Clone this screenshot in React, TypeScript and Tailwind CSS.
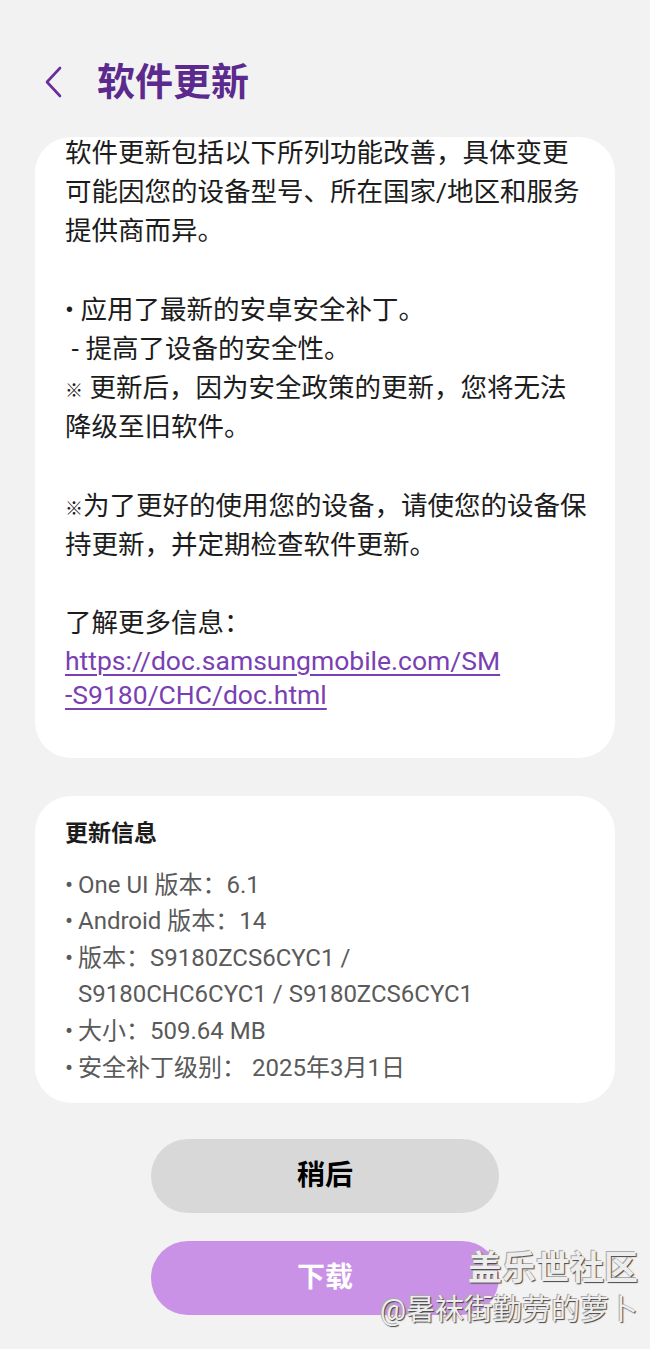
import React from 'react';

const font = 'Roboto, "Noto Sans CJK SC", "Noto Sans", sans-serif';

const infoItems = [
  ['One UI 版本：6.1'],
  ['Android 版本：14'],
  ['版本：S9180ZCS6CYC1 /', 'S9180CHC6CYC1 / S9180ZCS6CYC1'],
  ['大小：509.64 MB'],
  ['安全补丁级别： 2025年3月1日'],
];

const App = () => {
  return (
    <div
      className="relative min-h-[1349px] w-[650px] bg-[#f2f2f2] overflow-hidden"
      style={{ fontFamily: font }}
    >
      <header className="flex items-center h-[44px] mt-[60px] pl-[40px] gap-[29px]">
        <svg width="28" height="36" viewBox="0 0 28 36" className="text-[#6a2d9c]">
          <path d="M20 4 L7 18 L20 32" fill="none" stroke="currentColor" strokeWidth="2.6" strokeLinecap="round" strokeLinejoin="round" />
        </svg>
        <h1 className="text-[38px] font-bold text-[#5c2a8e] leading-none">软件更新</h1>
      </header>

      <div className="flow-root mx-[35px] mt-[33px] bg-white rounded-[36px] pl-[30px] pr-[26px] pb-[46px] text-[26.5px] leading-[39.2px] text-[#1c1c1c]">
        <div className="-mt-[4px]">
          <p>软件更新包括以下所列功能改善，具体变更可能因您的设备型号、所在国家/地区和服务提供商而异。</p>
          <p className="h-[39.2px]" />
          <p>• 应用了最新的安卓安全补丁。</p>
          <p>&nbsp;- 提高了设备的安全性。</p>
          <p className="h-[78.4px]">
            <span className="text-[18px] leading-none">※</span> 更新后，因为安全政策的更新，您将无法降级至旧软件。
          </p>
          <p className="h-[39.2px]" />
          <p className="h-[78.4px]">
            <span className="text-[18px] leading-none">※</span>为了更好的使用您的设备，请使您的设备保持更新，并定期检查软件更新。
          </p>
          <p className="h-[39.2px]" />
          <p>了解更多信息：</p>
          <a
            href="#"
            className="block text-[#7a3fb2] underline underline-offset-[4px] decoration-[2px] leading-[34px] mt-[1px]"
          >
            https://doc.samsungmobile.com/SM
            <br />
            -S9180/CHC/doc.html
          </a>
        </div>
      </div>

      <div className="mx-[35px] mt-[38px] bg-white rounded-[36px] pl-[30px] pr-[30px] pt-[20px] pb-[17px]">
        <h2 className="text-[23px] font-bold text-[#1c1c1c] leading-[36px]">更新信息</h2>
        <ul className="mt-[15px] text-[24px] leading-[36.6px] text-[#5a5a5a]">
          {infoItems.map((lines, i) => (
            <li key={i} className="flex">
              <span className="w-[13px] shrink-0">•</span>
              <span className="flex flex-col">
                {lines.map((line, j) => (
                  <span key={j}>{line}</span>
                ))}
              </span>
            </li>
          ))}
        </ul>
      </div>

      <div className="flex flex-col items-center gap-[28px] mt-[36px]">
        <button className="w-[348px] h-[74px] rounded-full bg-[#d8d8d8] text-[28px] font-bold text-black">
          稍后
        </button>
        <button className="w-[348px] h-[74px] rounded-full bg-[#c992e6] text-[28px] font-bold text-white">
          下载
        </button>
      </div>

      <div className="absolute right-[12px] top-[1246px] flex flex-col items-end text-[#ededed] [text-shadow:1px_1px_1px_#444,-1px_-1px_0_#aaa]">
        <span className="text-[34px] leading-[44px] font-bold">盖乐世社区</span>
        <span className="text-[29px] leading-[40px]">@暑袜街勤劳的萝卜</span>
      </div>
    </div>
  );
};

export default App;
